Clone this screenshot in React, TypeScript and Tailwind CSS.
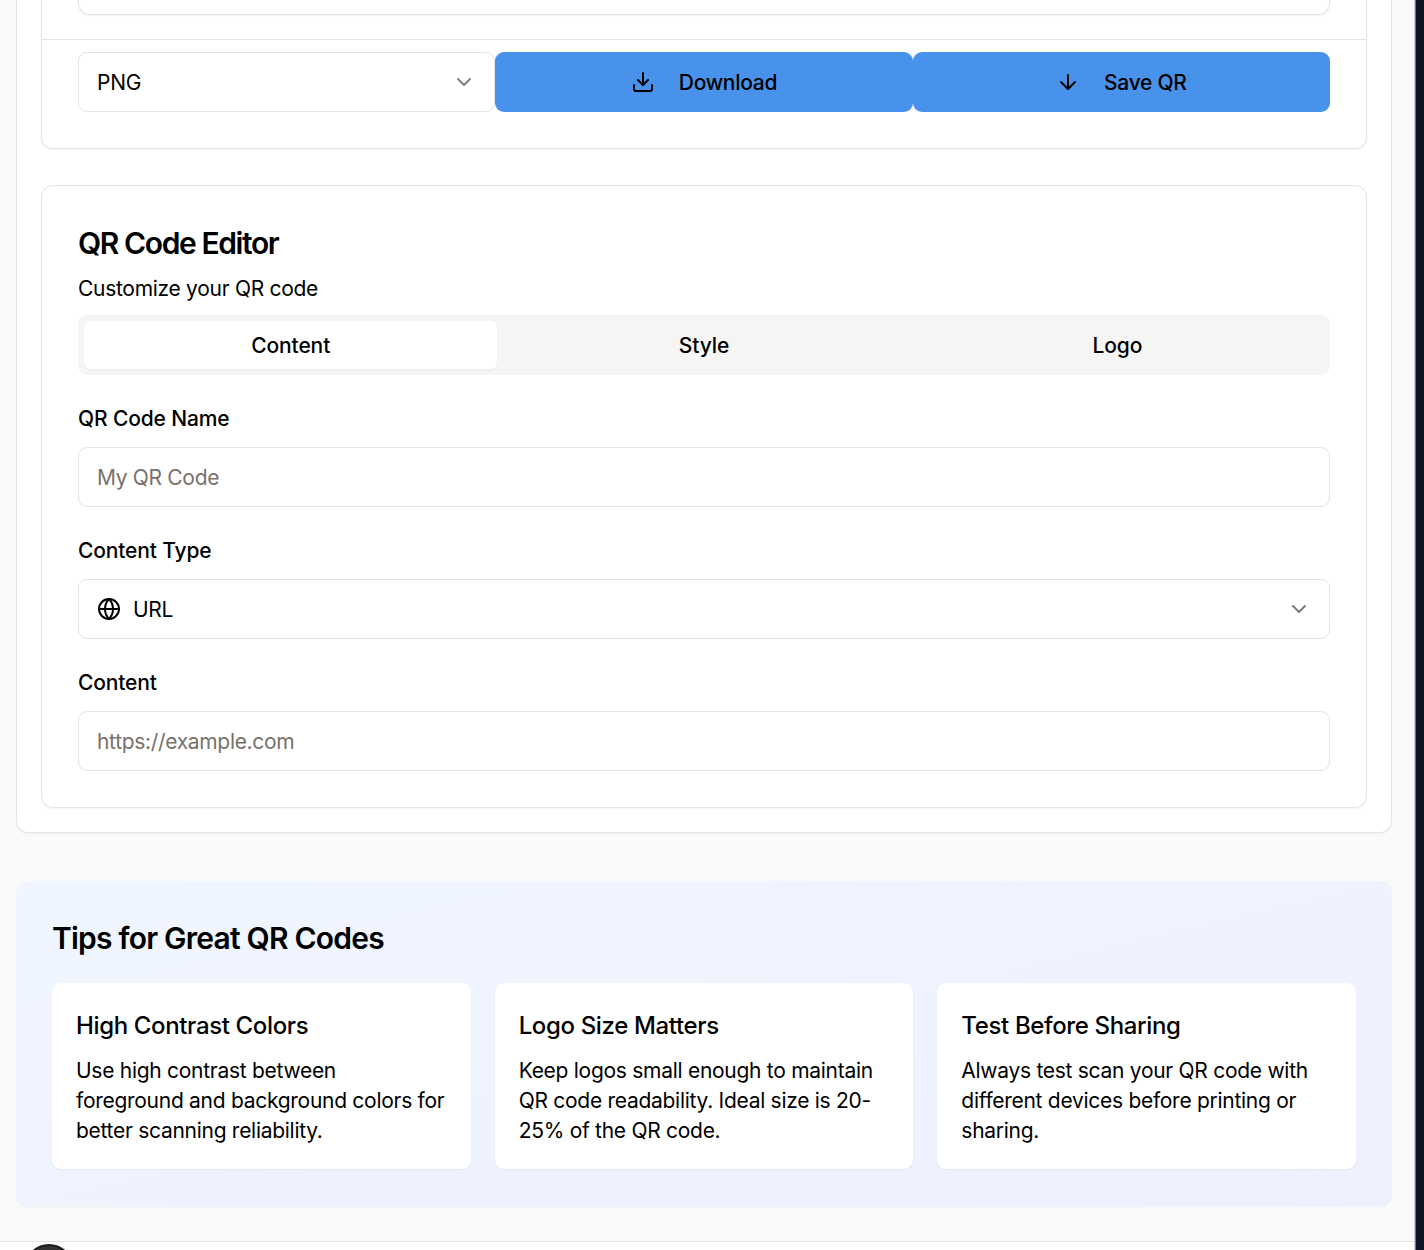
import { ArrowDown, ChevronDown, Download, Globe } from "lucide-react";
import type { ReactNode } from "react";

const tips = [
  {
    title: "High Contrast Colors",
    body: "Use high contrast between foreground and background colors for better scanning reliability.",
  },
  {
    title: "Logo Size Matters",
    body: "Keep logos small enough to maintain QR code readability. Ideal size is 20-25% of the QR code.",
  },
  {
    title: "Test Before Sharing",
    body: "Always test scan your QR code with different devices before printing or sharing.",
  },
];

function Field({ label, children }: { label: string; children: ReactNode }) {
  return (
    <div className="flex flex-col gap-[18px]">
      <label className="h-[21px] text-[21px] leading-[21px] font-medium tracking-[-0.14px]">{label}</label>
      {children}
    </div>
  );
}

function Select({ icon, children }: { icon?: ReactNode; children: ReactNode }) {
  return (
    <button className="flex h-[60px] w-full items-center justify-between rounded-[9px] border border-[#e4e4e4] bg-white px-[18px] text-[21px] leading-[30px] tracking-[-0.27px]">
      <span className="flex items-center gap-3">
        {icon}
        <span className="pt-0.5">{children}</span>
      </span>
      <ChevronDown className="size-6 text-black opacity-50" strokeWidth={2} />
    </button>
  );
}

const inputClass =
  "h-[60px] w-full rounded-[9px] border border-[#e4e4e4] bg-white px-[18px] text-[21px] leading-[30px] tracking-[-0.32px] outline-none placeholder:text-[#78716c]";

const actionClass =
  "flex h-[60px] items-center justify-center gap-6 rounded-[9px] bg-[#4892eb] text-[21px] leading-[30px] font-medium tracking-[-0.28px]";

export default function App() {
  return (
    <div className="flex h-[1250px] w-[1424px] overflow-hidden bg-[#0d1524] font-['Inter',sans-serif] text-black">
      <div className="flex w-[1414px] shrink-0 flex-col bg-[#f9fafc]">
        <main className="flex flex-col pl-4">
          <section className="flex h-[833px] w-[1376px] flex-col gap-9 rounded-b-xl border border-t-0 border-[#e4e4e4] bg-white px-6 pb-6 shadow-xs">
            <div className="flex h-[149px] shrink-0 flex-col rounded-b-xl border border-t-0 border-[#e4e4e4] shadow-xs">
              <div className="h-10 border-b border-[#e4e4e4] px-9">
                <div className="h-[15px] rounded-b-xl border border-t-0 border-[#e4e4e4] shadow-xs" />
              </div>
              <div className="grid grid-cols-3 px-9 pt-3">
                <Select>PNG</Select>
                <button className={actionClass}>
                  <Download className="size-6" strokeWidth={2} />
                  <span className="pt-0.5">Download</span>
                </button>
                <button className={actionClass}>
                  <ArrowDown className="size-6" strokeWidth={2} />
                  <span className="pt-0.5">Save QR</span>
                </button>
              </div>
            </div>

            <div className="flex h-[623px] shrink-0 flex-col rounded-xl border border-[#e4e4e4] px-9 pt-9 shadow-xs">
              <h2 className="mt-[3px] text-[30px] leading-[36px] font-semibold tracking-[-1.4px]">
                QR Code Editor
              </h2>
              <p className="mt-[13px] text-[21px] leading-[30px] tracking-[-0.29px]">Customize your QR code</p>
              <div className="mt-[11px] grid h-[60px] shrink-0 grid-cols-3 rounded-[9px] bg-[#f5f5f4] p-1.5 text-[21px] font-medium tracking-[-0.1px]">
                <button className="rounded-md bg-white pt-0.5 shadow-xs">Content</button>
                <button className="pt-0.5">Style</button>
                <button className="pt-0.5">Logo</button>
              </div>
              <div className="mt-[33px] flex flex-col gap-[33px]">
                <Field label="QR Code Name">
                  <input className={inputClass} placeholder="My QR Code" />
                </Field>
                <Field label="Content Type">
                  <Select icon={<Globe className="size-6" strokeWidth={2} />}>URL</Select>
                </Field>
                <Field label="Content">
                  <input className={inputClass} placeholder="https://example.com" />
                </Field>
              </div>
            </div>
          </section>

          <section className="mt-12 h-[325px] w-[1376px] rounded-xl bg-linear-to-br from-[#f0f6ff] to-[#eef0fe] p-9 shadow-xs">
            <h2 className="text-[30px] leading-[42px] font-semibold tracking-[-0.78px]">
              Tips for Great QR Codes
            </h2>
            <div className="mt-6 grid grid-cols-3 gap-6">
              {tips.map((tip) => (
                <article key={tip.title} className="h-[186px] rounded-[9px] bg-white px-6 pt-[25px] shadow-xs">
                  <h3 className="text-2xl leading-9 font-medium tracking-[-0.36px]">{tip.title}</h3>
                  <p className="mt-3 text-[21px] leading-[30px] tracking-[-0.28px]">{tip.body}</p>
                </article>
              ))}
            </div>
          </section>
        </main>

        <footer className="mt-[35px] h-[9px] shrink-0 overflow-hidden border-t border-[#e4e4e4] bg-white pt-[2px] pl-6">
          <div className="size-[50px] rounded-full border-2 border-[#1c1c1c] bg-[#333131]" />
        </footer>
      </div>
      <div className="w-0.5 shrink-0 border-r border-[#7468b4] bg-[#d3d0ee]" />
    </div>
  );
}
